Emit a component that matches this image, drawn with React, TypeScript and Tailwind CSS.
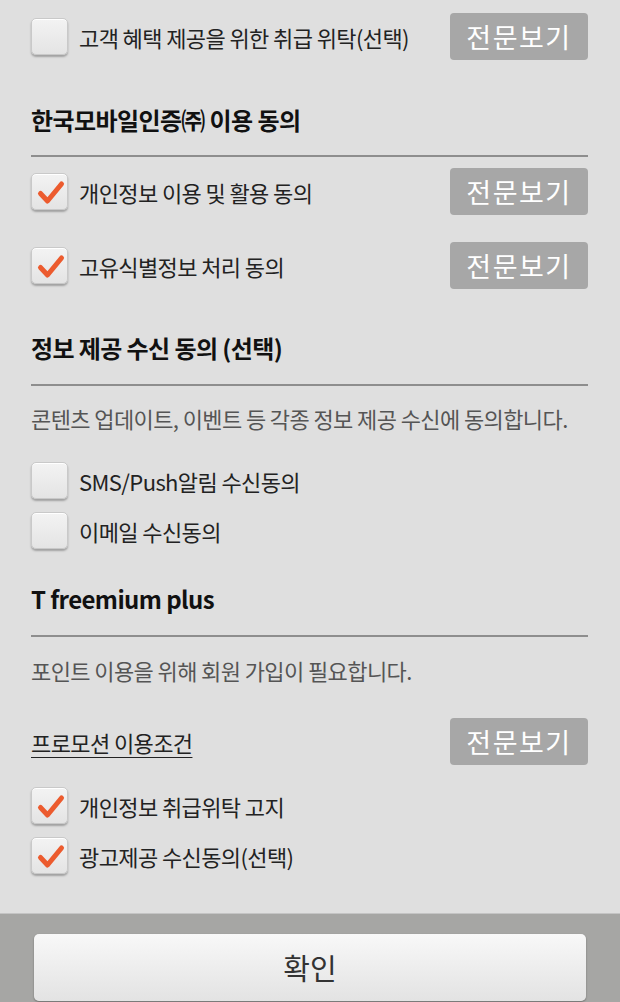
import React from "react";

const FONT = { fontFamily: '"Noto Sans CJK KR", "Noto Sans", sans-serif' };

function Check({ checked }: { checked: boolean }) {
  return (
    <div className="relative w-[37px] h-[37px] shrink-0 rounded-[5px] border border-[#c9c9c9] bg-gradient-to-b from-[#f3f3f3] to-[#e4e4e4] shadow-[0_2px_2px_rgba(0,0,0,0.28),inset_0_1px_0_#ffffff]">
      {checked && (
        <svg viewBox="0 0 37 37" className="absolute left-0 top-0 w-[37px] h-[37px]">
          <path
            d="M8.5 19.5 L15.5 27 L29.5 10"
            fill="none"
            stroke="#ec5b2e"
            strokeWidth="5"
            strokeLinecap="round"
            strokeLinejoin="round"
          />
        </svg>
      )}
    </div>
  );
}

function ViewBtn() {
  return (
    <div className="w-[138px] h-[47px] shrink-0 rounded-[4px] bg-[#a7a7a7] flex items-center justify-center text-white text-[27px] tracking-[1.5px] leading-none">
      전문보기
    </div>
  );
}

function CheckRow({
  label,
  checked,
  btn,
  h = 47,
}: {
  label: string;
  checked: boolean;
  btn?: boolean;
  h?: number;
}) {
  return (
    <div className="flex items-center justify-between" style={{ height: h }}>
      <div className="flex items-center gap-[11px]">
        <Check checked={checked} />
        <span className="text-[22px] tracking-[-0.6px] text-[#222] leading-none">{label}</span>
      </div>
      {btn && <ViewBtn />}
    </div>
  );
}

function Heading({ text }: { text: string }) {
  return (
    <div className="h-[32px] flex items-center text-[24px] font-bold tracking-[-0.6px] text-[#111] leading-none">
      {text}
    </div>
  );
}

function Divider() {
  return <div className="h-[2px] bg-[#8e8e8e]" />;
}

export default function App() {
  return (
    <div style={FONT} className="w-[620px] h-[1002px] bg-[#dfdfdf] flex flex-col overflow-hidden">
      <div className="flex-1 flex flex-col pl-[31px] pr-[32px] pt-[13px]">
        <CheckRow label="고객 혜택 제공을 위한 취급 위탁(선택)" checked={false} btn />
        <div className="h-[44px]" />
        <Heading text="한국모바일인증㈜ 이용 동의" />
        <div className="h-[19px]" />
        <Divider />
        <div className="h-[11px]" />
        <CheckRow label="개인정보 이용 및 활용 동의" checked btn />
        <div className="h-[27px]" />
        <CheckRow label="고유식별정보 처리 동의" checked btn />
        <div className="h-[43px]" />
        <Heading text="정보 제공 수신 동의 (선택)" />
        <div className="h-[20px]" />
        <Divider />
        <div className="h-[18px]" />
        <div className="h-[28px] flex items-center text-[22px] tracking-[-0.6px] text-[#555] leading-none">
          콘텐츠 업데이트, 이벤트 등 각종 정보 제공 수신에 동의합니다.
        </div>
        <div className="h-[30px]" />
        <CheckRow label="SMS/Push알림 수신동의" checked={false} h={37} />
        <div className="h-[13px]" />
        <CheckRow label="이메일 수신동의" checked={false} h={37} />
        <div className="h-[34px]" />
        <Heading text="T freemium plus" />
        <div className="h-[20px]" />
        <Divider />
        <div className="h-[19px]" />
        <div className="h-[28px] flex items-center text-[22px] tracking-[-0.6px] text-[#555] leading-none">
          포인트 이용을 위해 회원 가입이 필요합니다.
        </div>
        <div className="h-[34px]" />
        <div className="h-[47px] flex items-center justify-between">
          <span className="text-[22px] tracking-[-0.6px] text-[#222] leading-none underline underline-offset-[5px] decoration-[1px]">
            프로모션 이용조건
          </span>
          <ViewBtn />
        </div>
        <div className="h-[22px]" />
        <CheckRow label="개인정보 취급위탁 고지" checked h={37} />
        <div className="h-[13px]" />
        <CheckRow label="광고제공 수신동의(선택)" checked h={37} />
      </div>
      <div className="h-[89px] bg-[#a6a6a4] border-t border-[#c4c4c4] px-[34px] pt-[20px]">
        <div className="h-[67px] w-[552px] rounded-[5px] bg-gradient-to-b from-[#f8f8f8] to-[#e3e3e3] shadow-[0_1px_2px_rgba(0,0,0,0.35)] flex items-center justify-center text-[29px] text-[#333] leading-none">
          확인
        </div>
      </div>
    </div>
  );
}
